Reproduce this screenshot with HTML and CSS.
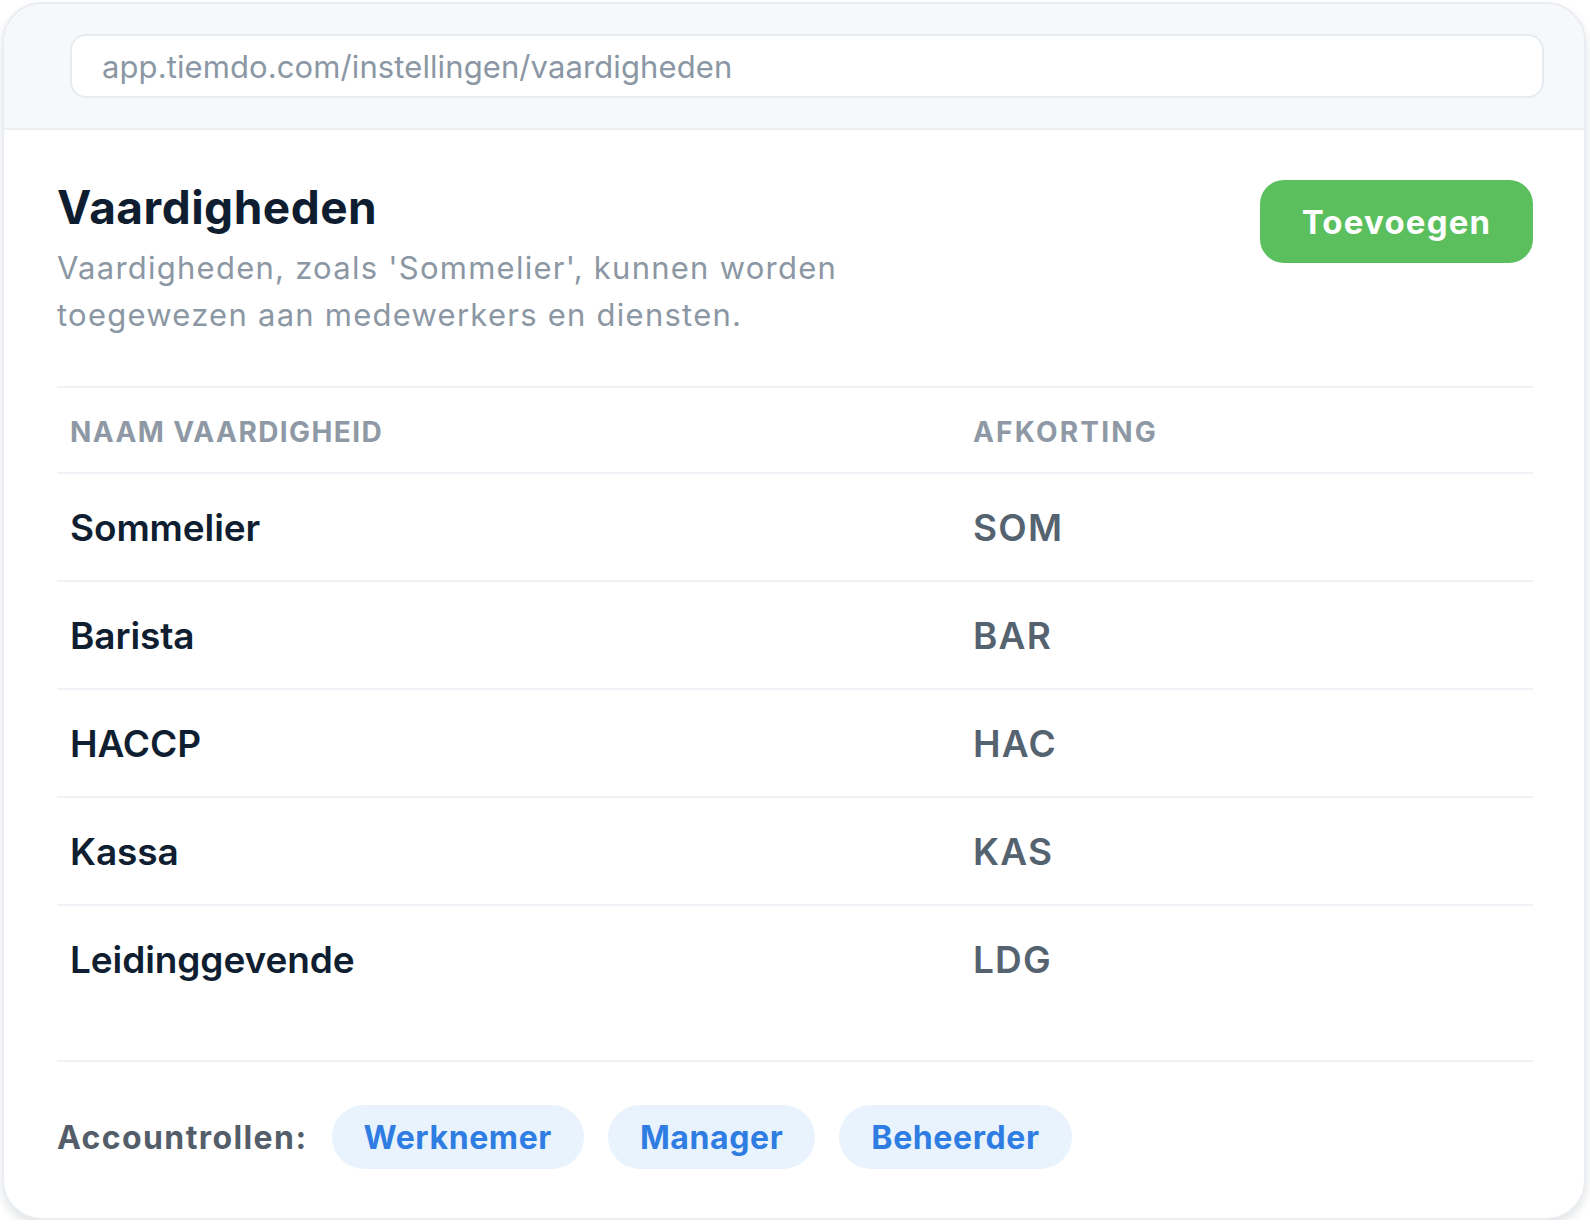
FILE: index.html
```html
<!DOCTYPE html>
<html lang="nl">
<head>
<meta charset="utf-8">
<title>Vaardigheden</title>
<link rel="stylesheet" href="styles.css">
</head>
<body>
<div class="window">
  <div class="topbar">
    <div class="urlbar">app.tiemdo.com/instellingen/vaardigheden</div>
  </div>
  <div class="content">
    <div class="page-head">
      <div class="titles">
        <h1 class="title">Vaardigheden</h1>
        <p class="subtitle">Vaardigheden, zoals 'Sommelier', kunnen worden toegewezen aan medewerkers en diensten.</p>
      </div>
      <button class="btn-add">Toevoegen</button>
    </div>
    <div class="table">
      <div class="row head">
        <div class="cell">NAAM VAARDIGHEID</div>
        <div class="cell">AFKORTING</div>
      </div>
      <div class="row">
        <div class="cell name">Sommelier</div>
        <div class="cell abbr">SOM</div>
      </div>
      <div class="row">
        <div class="cell name">Barista</div>
        <div class="cell abbr">BAR</div>
      </div>
      <div class="row">
        <div class="cell name">HACCP</div>
        <div class="cell abbr">HAC</div>
      </div>
      <div class="row">
        <div class="cell name">Kassa</div>
        <div class="cell abbr">KAS</div>
      </div>
      <div class="row last">
        <div class="cell name">Leidinggevende</div>
        <div class="cell abbr">LDG</div>
      </div>
    </div>
    <div class="footer">
      <span class="footer-label">Accountrollen:</span>
      <span class="pill">Werknemer</span>
      <span class="pill">Manager</span>
      <span class="pill">Beheerder</span>
    </div>
  </div>
</div>
</body>
</html>
```
FILE: styles.css
```css
* { box-sizing: border-box; }
html, body { margin: 0; padding: 0; background: #ffffff; }
body {
  font-family: Inter, "Noto Sans", "Liberation Sans", sans-serif;
  padding: 2px 4px 0 2px;
}
.window {
  width: 1584px;
  border: 2px solid #eaedf1;
  border-radius: 40px;
  background: #ffffff;
  overflow: hidden;
  box-shadow: 0 5px 10px rgba(20, 30, 45, 0.12);
}
.topbar {
  background: #f7f8fa;
  border-bottom: 2px solid #edf0f3;
  padding: 30px 40px 30px 66px;
}
.urlbar {
  height: 64px;
  border: 2px solid #e6ebf0;
  border-radius: 16px;
  background: #ffffff;
  display: flex;
  align-items: center;
  padding-left: 30px;
  font-size: 31px;
  letter-spacing: 0.1px;
  color: #8b97a4;
}
.content {
  padding: 50px 51px 49px 53px;
}
.page-head {
  display: flex;
  justify-content: space-between;
  align-items: flex-start;
}
.title {
  margin: 0;
  font-size: 46px;
  line-height: 54px;
  font-weight: 700;
  letter-spacing: 0.5px;
  color: #0e1d30;
}
.subtitle {
  margin: 10px 0 0;
  max-width: 830px;
  font-size: 31px;
  line-height: 47px;
  color: #8c97a4;
  letter-spacing: 1.25px;
}
.btn-add {
  margin-top: 0;
  height: 83px;
  width: 273px;
  border: none;
  border-radius: 24px;
  background: #5abf5c;
  color: #ffffff;
  font-family: inherit;
  font-size: 33px;
  font-weight: 700;
  letter-spacing: 1.2px;
}
.table {
  margin-top: 48px;
  border-top: 2px solid #eef1f5;
}
.row {
  display: grid;
  grid-template-columns: 903px 1fr;
  align-items: center;
  height: 108px;
  border-bottom: 2px solid #eef1f5;
}
.row.head { height: 86px; }
.row.last { border-bottom: none; height: 106px; }
.cell { padding-left: 13px; }
.head .cell {
  font-size: 28px;
  font-weight: 700;
  letter-spacing: 1.4px;
  color: #8e99a5;
  padding-top: 3px;
}
.head .cell + .cell { letter-spacing: 2.2px; }
.name {
  font-size: 37px;
  font-weight: 600;
  letter-spacing: -0.1px;
  color: #0f1e30;
}
.abbr {
  font-size: 37px;
  font-weight: 600;
  letter-spacing: 1.2px;
  color: #556270;
}
.footer {
  margin-top: 48px;
  border-top: 2px solid #eef1f5;
  padding-top: 43px;
  display: flex;
  align-items: center;
  gap: 24px;
}
.footer-label {
  font-size: 32px;
  font-weight: 700;
  letter-spacing: 1.4px;
  color: #535e6a;
}
.pill {
  height: 64px;
  padding: 0 32px;
  border-radius: 32px;
  background: #e9f3fd;
  color: #2f7de3;
  font-size: 32px;
  font-weight: 700;
  letter-spacing: 0.6px;
  display: flex;
  align-items: center;
}
```
